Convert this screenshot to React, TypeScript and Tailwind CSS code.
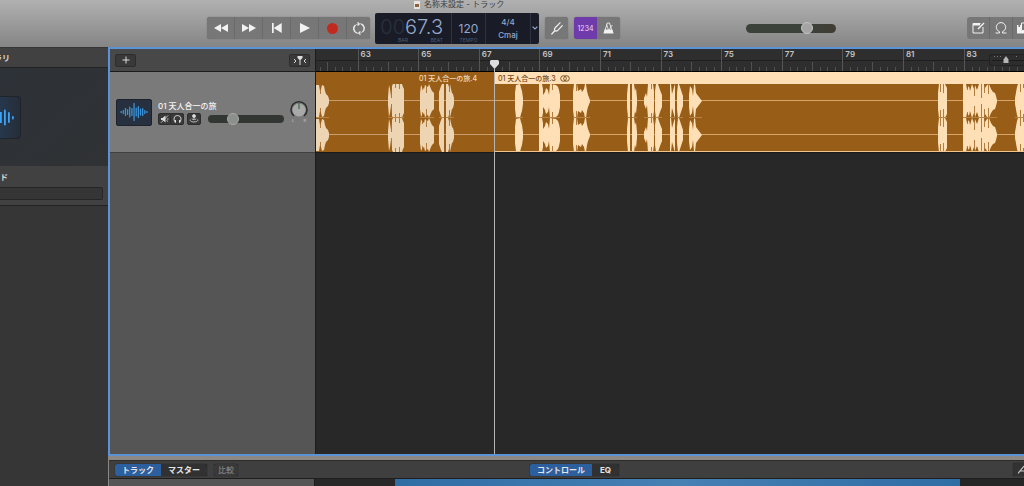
import { useState, type ReactNode } from 'react';
import clsx from 'clsx';

type Point = [number, number];

interface Wave {
  /** Envelopes as [x, half height] pairs, one list per burst */
  bursts: Point[][];
  /** Quiet gaps cut into a burst: [x, depth from the channel edge] */
  slits: Point[];
}

const CHANNELS = [17, 51];
const BAR_PAIR = 60.6;
const RULER_START = -19;
const BARS = Array.from({ length: 12 }, (_, i) => 61 + i * 2);

const LEFT_WAVE: Wave = {
  bursts: [
    [[0, 16], [3, 16], [4, 10], [5, 12], [6, 16], [8, 15], [9, 10], [10, 7], [12, 5], [13, 2]],
    [[72, 4], [73, 16], [74, 12], [75, 5], [76, 15], [77, 17], [86, 17], [87, 14], [88, 12], [88, 2]],
    [[104, 8], [105, 16], [106, 14], [108, 12], [109, 16], [112, 14], [113, 17], [115, 12], [116, 10], [118, 8], [118, 2]],
    [[123, 9], [125, 15], [126, 17], [128, 17], [128, 2]],
    [[130, 17], [132, 17], [133, 14], [134, 17], [135, 12], [136, 8], [137, 7], [138, 3]],
  ],
  slits: [[4, 10], [75, 14], [79, 4], [83, 5], [106, 6], [110, 9], [133, 8]],
};

const RIGHT_WAVE: Wave = {
  bursts: [
    [[20, 8], [21, 16], [25, 17], [26, 13], [27, 10], [28, 3]],
    [[44, 17], [47, 17], [48, 12], [48, 6], [50, 9], [51, 13], [53, 11], [54, 6], [55, 17], [61, 16], [63, 14], [64, 11], [65, 6]],
    [[78, 9], [79, 17], [82, 17], [83, 10], [86, 12], [87, 9], [89, 12], [90, 17], [91, 17], [92, 10], [93, 6], [95, 1]],
    [[132, 6], [133, 17], [135, 17], [135, 2]],
    [[137, 17], [139, 17], [140, 10], [141, 13], [142, 3]],
    [[149, 3], [151, 8], [152, 4], [153, 17], [158, 17], [159, 10], [159, 2]],
    [[160, 10], [161, 17], [163, 17], [165, 11], [167, 6], [167, 2]],
    [[175, 17], [176, 17], [177, 7], [179, 14], [180, 17], [180, 2]],
    [[182, 8], [183, 17], [184, 17], [186, 11], [188, 5], [188, 1]],
    [[194, 6], [195, 15], [197, 12], [198, 5], [199, 16], [200, 17], [201, 8], [204, 4], [207, 0]],
    [[443, 8], [444, 17], [450, 17], [452, 13], [452, 6]],
    [[468, 17], [471, 17], [472, 12], [474, 15], [475, 10], [477, 17], [479, 12], [480, 16], [482, 11], [484, 17], [489, 17], [490, 13], [492, 16], [494, 17], [496, 12], [498, 9], [500, 8], [501, 5], [502, 1]],
    [[520, 3], [522, 14], [523, 17], [560, 17], [566, 3]],
  ],
  slits: [[57, 6], [81, 7], [156, 5], [445, 8], [448, 9], [472, 6], [479, 12], [486, 14], [489, 9], [493, 10], [525, 8], [528, 4]],
};

const envelope = (points: Point[], mid: number) =>
  [
    ...points.map(([x, h]) => `${x},${mid - h}`),
    ...[...points].reverse().map(([x, h]) => `${x},${mid + h}`),
  ].join(' ');

function Waveform({ wave, color, line }: { wave: Wave; color: string; line: string }) {
  return (
    <svg className="block h-[68px] w-full" aria-hidden="true">
      {CHANNELS.map((mid) => (
        <g key={mid}>
          <rect x="0" y={mid - 1} width="100%" height="1" fill={line} />
          {wave.bursts.map((b) => (
            <polygon key={b[0][0]} points={envelope(b, mid)} fill={color} />
          ))}
          {wave.slits.map(([x, d]) => (
            <g key={x} fill="#985d17" opacity="0.75">
              <rect x={x} y={mid - 17} width="1" height={d} />
              <rect x={x} y={mid + 17 - d} width="1" height={d} />
            </g>
          ))}
        </g>
      ))}
      {wave.bursts.map((b) => (
        <rect
          key={b[0][0]}
          x={b[0][0]}
          y="33"
          width={b[b.length - 1][0] - b[0][0]}
          height="1"
          fill="#b88245"
        />
      ))}
    </svg>
  );
}

function AudioIcon() {
  const bars = [2, 4, 8, 6, 11, 8, 18, 9, 12, 7, 8, 4, 2];
  return (
    <svg width="30" height="20" viewBox="0 0 30 20" aria-hidden="true">
      {bars.map((h, i) => (
        <rect key={i} x={1.5 + i * 2.15} y={10 - h / 2} width="1.3" height={h} rx="0.6" fill="#3b93d8" />
      ))}
    </svg>
  );
}

function ToolButton({ label, children, className }: { label: string; children: ReactNode; className?: string }) {
  return (
    <button
      type="button"
      aria-label={label}
      className={clsx('flex h-[22px] items-center justify-center text-[#f2f2f2]', className)}
    >
      {children}
    </button>
  );
}

function Transport() {
  return (
    <div className="flex shrink-0 divide-x divide-[#6a6a6a] rounded-[3px] bg-[#777] shadow-[0_0_1px_#555]">
      <ToolButton label="巻き戻し" className="w-[28px]">
        <svg width="14" height="10" viewBox="0 0 14 10" fill="currentColor">
          <path d="M7 1v8L0 5zM14 1v8L7 5z" />
        </svg>
      </ToolButton>
      <ToolButton label="早送り" className="w-[28px]">
        <svg width="14" height="10" viewBox="0 0 14 10" fill="currentColor">
          <path d="M0 1v8l7-4zM7 1v8l7-4z" />
        </svg>
      </ToolButton>
      <ToolButton label="先頭へ" className="w-[28px]">
        <svg width="10" height="10" viewBox="0 0 10 10" fill="currentColor">
          <path d="M0 0h1.7v10H0zM9.7 0v10L1.7 5z" />
        </svg>
      </ToolButton>
      <ToolButton label="再生" className="w-[28px]">
        <svg width="10" height="10" viewBox="0 0 10 10" fill="currentColor">
          <path d="M0 0v10l10-5z" />
        </svg>
      </ToolButton>
      <ToolButton label="録音" className="w-[28px]">
        <span className="size-[11px] rounded-full bg-[#c22a20]" />
      </ToolButton>
      <ToolButton label="サイクル" className="w-[23px]">
        <svg width="14" height="13" viewBox="0 0 14 13" fill="none" stroke="currentColor" strokeWidth="1.1">
          <path d="M5.6 11.200H5A4.700 4.700 0 0 1 3.400 3M8.400 1.800H9a4.700 4.700 0 0 1 1.600 8.200" />
          <path d="M5.600 11.200A5 5 0 0 1 2.200 6.500 4.700 4.700 0 0 1 7 1.800M8.400 11.200a5 5 0 0 0 3.400-4.700A4.700 4.700 0 0 0 9 2.400" strokeWidth=".6" />
          <path d="M5.600.3 7.300 1.900 5.600 3.500M8.400 9.500 6.700 11.100l1.700 1.600" />
        </svg>
      </ToolButton>
    </div>
  );
}

function Display() {
  return (
    <div className="ml-[5px] flex h-[31px] shrink-0 divide-x divide-[#2d3340] rounded-[2px] bg-[#191c27] text-[#94a9cb]">
      <div className="flex w-[77px] flex-col items-end pr-[8px]">
        <span className="mt-[4px] text-[20px] leading-[20px] font-light">
          <span className="text-[#2b303d]">00</span>67.3
        </span>
        <span className="flex w-[45px] justify-between text-[5px] leading-[6px] text-[#4b5a72]">
          <span>BAR</span>
          <span>BEAT</span>
        </span>
      </div>
      <div className="flex w-[34px] flex-col items-center">
        <span className="mt-[8px] text-[12px] leading-[16px]">120</span>
        <span className="text-[5px] leading-[6px] text-[#4b5a72]">TEMPO</span>
      </div>
      <div className="flex w-[45px] flex-col items-center pt-[3px] text-[8px] leading-[13px] font-medium">
        <span>4/4</span>
        <span>Cmaj</span>
      </div>
      <button type="button" aria-label="表示モード" className="flex w-[8px] items-center justify-center">
        <svg width="6" height="4" viewBox="0 0 6 4" fill="none" stroke="currentColor" strokeWidth="1.2">
          <path d="M.6.6 3 3 5.400.6" />
        </svg>
      </button>
    </div>
  );
}

function Toolbar() {
  const [volume, setVolume] = useState(71);
  return (
    <header className="flex h-[47px] flex-col overflow-hidden bg-gradient-to-b from-[#b1b1b1] to-[#858585]">
      <div className="flex h-[9px] items-center gap-[4px] pl-[414px]">
        <svg width="6" height="8" viewBox="0 0 6 8" aria-hidden="true">
          <rect width="6" height="8" fill="#e8e4df" />
          <rect x="1" y="3" width="4" height="3" fill="#8c6038" />
        </svg>
        <h1 className="text-[8px] leading-[9px] whitespace-nowrap text-[#3d3d3d]">名称未設定 - トラック</h1>
      </div>
      <div className="flex h-[38px] items-center pl-[207px]">
        <Transport />
        <Display />
        <div className="ml-[6px] flex shrink-0 rounded-[3px] bg-[#777] shadow-[0_0_1px_#555]">
          <ToolButton label="チューナー" className="w-[23px]">
            <svg width="12" height="13" viewBox="0 0 12 13" fill="none" stroke="currentColor" strokeWidth="1.2" strokeLinecap="round">
              <path d="M.8 12 4 8.500M9 .8 4.400 5.500C3.300 6.700 3.300 7.800 4 8.500s2 .6 3-.4L11.300 3.600" />
            </svg>
          </ToolButton>
        </div>
        <div className="ml-[6px] flex shrink-0 overflow-hidden rounded-[3px] bg-[#777] shadow-[0_0_1px_#555]">
          <ToolButton label="カウントイン" className="w-[23px] bg-[#6f3bab]">
            <span className="text-[7px] leading-none text-[#eadcf8]">1234</span>
          </ToolButton>
          <ToolButton label="メトロノーム" className="w-[23px]">
            <svg width="11" height="12" viewBox="0 0 11 12" fill="none" stroke="currentColor">
              <path d="M2 8.500 4.300 1h2.200l2.200 7" strokeWidth=".9" />
              <path d="M1.600 7.500h7.800l1.200 4H.4z" fill="currentColor" stroke="none" />
              <path d="M5.500 8 3.600 2.500M9.300 3 6 8" strokeWidth=".8" />
            </svg>
          </ToolButton>
        </div>
        <input
          type="range"
          aria-label="マスター音量"
          value={volume}
          onChange={(e) => setVolume(Number(e.target.value))}
          className="ml-[126px] h-[9px] w-[90px] shrink-0 appearance-none rounded-full bg-gradient-to-r from-[#3a423a] from-60% to-[#403d33] [&::-webkit-slider-thumb]:size-[12px] [&::-webkit-slider-thumb]:appearance-none [&::-webkit-slider-thumb]:rounded-full [&::-webkit-slider-thumb]:border [&::-webkit-slider-thumb]:border-[#c4c4c4] [&::-webkit-slider-thumb]:bg-[#a5a5a5]"
        />
        <div className="ml-auto w-[57px] shrink-0 overflow-hidden">
          <div className="flex w-[69px] divide-x divide-[#6a6a6a] rounded-l-[3px] bg-[#777]">
            <ToolButton label="メモパッド" className="w-[23px]">
              <svg width="13" height="12" viewBox="0 0 13 12" fill="none" stroke="currentColor">
                <path d="M8.500 1.500H1v9.500h10V5" />
                <path d="M1 2.500h7" strokeWidth="2" />
                <path d="m6 7 6-6" strokeWidth="1.500" />
              </svg>
            </ToolButton>
            <ToolButton label="ループブラウザ" className="w-[23px]">
              <svg width="12" height="12" viewBox="0 0 12 12" fill="none" stroke="currentColor">
                <path d="M.5 11h4V9.700a4.700 4.700 0 1 1 3 0V11h4" />
              </svg>
            </ToolButton>
            <ToolButton label="メディアブラウザ" className="w-[23px]">
              <svg width="15" height="12" viewBox="0 0 15 12" fill="none" stroke="currentColor">
                <path d="M4.500 1h10v7.500h-10z" />
                <path d="M0 3h1.500v2H3V3h1v6h9v2.500H0zM7 3.500h2V8H7z" fill="currentColor" stroke="none" />
              </svg>
            </ToolButton>
          </div>
        </div>
      </div>
    </header>
  );
}

function Library() {
  return (
    <aside className="flex w-[108px] shrink-0 flex-col bg-[#363636] pt-px text-[#d8d8d8]">
      <div className="flex h-[20px] items-center border-b border-[#232323] bg-[#414141]">
        <h2 className="flex w-[10px] justify-end overflow-hidden text-[8px] leading-[12px] font-bold whitespace-nowrap">ラリ</h2>
      </div>
      <div className="flex h-[98px] items-center bg-gradient-to-br from-[#2d3238] to-[#303234]">
        <div className="h-[43px] w-[21px] rounded-r-[4px] border border-l-0 border-[#1f242b] bg-gradient-to-r from-[#26384e] to-[#262d39]">
          <svg width="20" height="41" viewBox="0 0 20 41" fill="#41a2f2" aria-hidden="true">
            <rect x="0" y="15" width="1.800" height="11" />
            <rect x="4" y="12.500" width="1.800" height="16" rx=".9" />
            <rect x="8" y="15" width="1.800" height="11" rx=".9" />
            <rect x="12" y="19" width="1.800" height="3.500" rx=".9" />
          </svg>
        </div>
      </div>
      <div className="h-[40px] border-b border-[#232323] bg-[#414141]">
        <h2 className="flex h-[21px] items-center text-[8px] font-bold">ド</h2>
        <input
          type="text"
          aria-label="サウンドを検索"
          className="block h-[13px] w-[103px] rounded-r-[2px] border border-l-0 border-[#262626] bg-[#353535] text-[8px] outline-none"
        />
      </div>
    </aside>
  );
}

const smallButton = 'flex items-center justify-center rounded-[2px] border border-[#2d2d2d] bg-[#393939] text-[#dcdcdc]';

function TrackHeaders() {
  const [level, setLevel] = useState(30);
  return (
    <div className="flex w-[206px] shrink-0 flex-col border-r border-[#1c1c1c] bg-[#555]">
      <div className="flex h-[23px] items-center justify-between border-b border-[#1c1c1c] bg-[#484848] px-[5px]">
        <button type="button" aria-label="トラックを追加" className={clsx(smallButton, 'h-[13px] w-[21px]')}>
          <svg width="8" height="8" viewBox="0 0 8 8" stroke="currentColor">
            <path d="M4 .5v7M.5 4h7" />
          </svg>
        </button>
        <button type="button" aria-label="キャッチ" className={clsx(smallButton, 'h-[13px] w-[21px]')}>
          <svg width="14" height="9" viewBox="0 0 14 9" fill="none" stroke="currentColor">
            <path d="m1 3 2 2-2 2M13 3l-2 2 2 2" />
            <path d="M4.500 0h5v2L7.500 4V9h-1V4l-2-2z" fill="currentColor" stroke="none" />
          </svg>
        </button>
      </div>
      <div className="flex h-[81px] items-center border-b border-[#404040] bg-[#7a7a7a] pl-[6px]">
        <div className="flex h-[27px] w-[36px] items-center justify-center rounded-[2px] border border-[#1d222b] bg-[#26303e]">
          <AudioIcon />
        </div>
        <div className="ml-[6px] flex flex-col gap-[1px]">
          <span className="text-[8px] leading-[12px] font-medium text-[#f4f4f4]">01 天人合一の旅</span>
          <div className="flex items-center">
            <div className="flex">
              <button type="button" aria-label="ミュート" className={clsx(smallButton, 'h-[12px] w-[13px] rounded-r-none')}>
                <svg width="9" height="8" viewBox="0 0 9 8" fill="currentColor">
                  <path d="M1 3h1.500l3-2.500v7L2.500 5H1z" />
                  <path d="m1 7.700 7-7.200M6.800 4h1.700M6.500 5.500l1.500 1" fill="none" stroke="currentColor" strokeWidth=".8" />
                </svg>
              </button>
              <button type="button" aria-label="ソロ" className={clsx(smallButton, 'h-[12px] w-[13px] rounded-l-none border-l-0')}>
                <svg width="9" height="8" viewBox="0 0 9 8" fill="none" stroke="currentColor">
                  <path d="M2.500 7.500C.2 5 .5.600 4.500.6s4.300 4.400 2 6.900" />
                  <path d="M2.300 5v2.500M6.700 5v2.500" strokeWidth="1.400" />
                </svg>
              </button>
            </div>
            <button type="button" aria-label="モニタリング" className={clsx(smallButton, 'ml-[3px] h-[12px] w-[14px]')}>
              <svg width="10" height="9" viewBox="0 0 10 9" fill="none" stroke="currentColor" strokeWidth=".8">
                <circle cx="5" cy="2" r="1.500" fill="currentColor" />
                <path d="M5 3v2.500M3 4.500c-1 1.500 5 1.500 4 0M1.300 5.500C0 8.800 10 8.800 8.700 5.500" />
              </svg>
            </button>
            <input
              type="range"
              aria-label="トラック音量"
              value={level}
              onChange={(e) => setLevel(Number(e.target.value))}
              className="ml-[7px] h-[8px] w-[76px] appearance-none rounded-full bg-[#323734] [&::-webkit-slider-thumb]:size-[12px] [&::-webkit-slider-thumb]:appearance-none [&::-webkit-slider-thumb]:rounded-full [&::-webkit-slider-thumb]:border [&::-webkit-slider-thumb]:border-[#aaa] [&::-webkit-slider-thumb]:bg-[#8a908c]"
            />
          </div>
        </div>
        <div className="ml-[6px] flex w-[18px] flex-col items-center">
          <svg width="18" height="18" viewBox="0 0 18 18" aria-label="パン">
            <path d="M4 15A8 8 0 1 1 14 15" fill="none" stroke="#2c2c2c" strokeWidth="1.500" />
            <circle cx="9" cy="9" r="6.500" fill="#a9a9a9" />
            <path d="M9 1v7" stroke="#3c6b42" strokeWidth="1.200" />
          </svg>
          <span className="flex w-[14px] justify-between text-[4px] leading-[4px] text-[#c8c8c8]">
            <span>L</span>
            <span>R</span>
          </span>
        </div>
      </div>
    </div>
  );
}

function Ruler() {
  return (
    <div className="relative flex h-[23px] overflow-hidden border-b border-black bg-[#2e2e2e]">
      {BARS.map((bar, i) => (
        <div
          key={bar}
          className="shrink-0 border-l border-[#565656]"
          style={{ width: BAR_PAIR, marginLeft: i === 0 ? RULER_START : 0 }}
        >
          <div className="h-[12px] border-b border-[#1f1f1f] pl-[2px] text-[8px] leading-[10px] font-semibold text-[#c4c4c4]">
            {i > 0 && bar}
          </div>
          <svg width="60" height="10" className="block" aria-hidden="true">
            {[1, 2, 3, 4, 5, 6, 7].map((n) => (
              <rect
                key={n}
                x={Math.round((n * BAR_PAIR) / 8) - 1}
                y={n === 4 ? 1 : 6}
                width="1"
                height="10"
                fill="#505050"
              />
            ))}
          </svg>
        </div>
      ))}
      <div className="absolute top-[5px] right-0 flex h-[12px] w-[35px] items-center rounded-l-[3px] border border-r-0 border-[#222] bg-[#2d2d2d]">
        <svg width="34" height="10" viewBox="0 0 34 10" aria-hidden="true">
          <path d="M2 5.500h32" stroke="#1b1b1b" />
          <path d="M4 1.500h1M7 1.500h1M10 1.500h1M26 1.500h1" stroke="#777" />
          <path d="M16 1 13.500 4.500V8h5V4.500z" fill="#b5b5b5" />
        </svg>
      </div>
    </div>
  );
}

function Timeline() {
  return (
    <div className="relative min-w-0 flex-1 bg-[#282828]">
      <Ruler />
      <div className="flex h-[81px] border-b border-[#1a1a1a]">
        <div className="w-[178px] shrink-0 overflow-hidden bg-[#985d17]">
          <p className="h-[12px] pr-[17px] text-right text-[7px] leading-[13px] font-medium text-[#f3dcbc]">01 天人合一の旅.4</p>
          <Waveform wave={LEFT_WAVE} color="#edd5b3" line="#c99e6c" />
        </div>
        <div className="ml-[1px] min-w-0 flex-1 overflow-hidden border-b border-[#f0c48c] bg-[#985d17]">
          <p className="flex h-[12px] items-center gap-[4px] bg-[#ffdfb5] pl-[3px] text-[7px] leading-[13px] font-medium text-[#704718]">
            01 天人合一の旅.3
            <svg width="10" height="7" viewBox="0 0 10 7" fill="none" stroke="currentColor" strokeWidth=".9" aria-hidden="true">
              <circle cx="3.500" cy="3.500" r="2.800" />
              <circle cx="6.500" cy="3.500" r="2.800" />
            </svg>
          </p>
          <Waveform wave={RIGHT_WAVE} color="#ffdfb5" line="#d8a469" />
        </div>
      </div>
      {/* Playhead */}
      <div className="absolute top-[11px] bottom-0 left-[174px] flex w-[9px] flex-col items-center">
        <svg width="9" height="9" viewBox="0 0 9 9" className="shrink-0" aria-hidden="true">
          <path d="M1 0h7l1 1v3L4.500 9 0 4V1z" fill="#dedede" />
        </svg>
        <div className="w-px flex-1 bg-[#b5b5b5]" />
      </div>
    </div>
  );
}

function SmartControls() {
  const [scope, setScope] = useState('トラック');
  const [view, setView] = useState('コントロール');
  const tab = 'flex h-[12px] items-center justify-center text-[8px] font-bold whitespace-nowrap text-[#e4e4e4]';
  return (
    <section className="mt-[4px] ml-[1px] flex flex-col">
      <div className="flex h-[19px] items-center border-y border-t-[#2c2c2c] border-b-[#1e1e1e] bg-[#3f3f3f] pl-[6px]">
        <div className="flex overflow-hidden rounded-[2px] bg-[#313131] shadow-[0_0_1px_#000]">
          {['トラック', 'マスター'].map((name) => (
            <button
              key={name}
              type="button"
              onClick={() => setScope(name)}
              className={clsx(tab, 'w-[46px]', scope === name && 'bg-[#2c5f9e]')}
            >
              {name}
            </button>
          ))}
        </div>
        <button
          type="button"
          disabled
          className="ml-[7px] h-[12px] w-[24px] rounded-[2px] bg-[#393939] text-[8px] leading-[12px] text-[#939393] shadow-[0_0_1px_#000]"
        >
          比較
        </button>
        <div className="ml-[292px] flex overflow-hidden rounded-[2px] bg-[#313131] shadow-[0_0_1px_#000]">
          {['コントロール', 'EQ'].map((name) => (
            <button
              key={name}
              type="button"
              onClick={() => setView(name)}
              className={clsx(tab, name === 'EQ' ? 'w-[27px]' : 'w-[62px]', view === name && 'bg-[#2c5f9e]')}
            >
              {name}
            </button>
          ))}
        </div>
        <button
          type="button"
          aria-label="アルペジエータ"
          className="ml-auto flex h-[13px] w-[11px] items-center justify-end rounded-l-[2px] bg-[#323232] text-[#c8c8c8] shadow-[0_0_1px_#000]"
        >
          <svg width="6" height="9" viewBox="0 0 6 9" fill="none" stroke="currentColor" strokeWidth="1.200">
            <path d="M0 8.500 6 1M2 6h4" />
          </svg>
        </button>
      </div>
      <div className="flex h-[7px]">
        <div className="w-[206px] shrink-0 border-r border-[#1c1c1c] bg-[#555]" />
        <div className="w-[80px] shrink-0 bg-[#282828]" />
        <div className="flex-1 bg-gradient-to-r from-[#2f6da5] via-[#4780b3] to-[#2f6da5]" />
        <div className="w-[64px] shrink-0 bg-[#262626]" />
      </div>
    </section>
  );
}

export default function App() {
  return (
    <div className="flex min-h-screen flex-col overflow-hidden bg-[#8b8886] font-['Inter','Noto_Sans_CJK_JP',sans-serif]">
      <Toolbar />
      <div className="flex flex-1">
        <Library />
        <main className="flex min-w-0 flex-1 flex-col">
          <section className="flex flex-1 border-2 border-r-0 border-[#5c93d6]">
            <TrackHeaders />
            <Timeline />
          </section>
          <SmartControls />
        </main>
      </div>
    </div>
  );
}
